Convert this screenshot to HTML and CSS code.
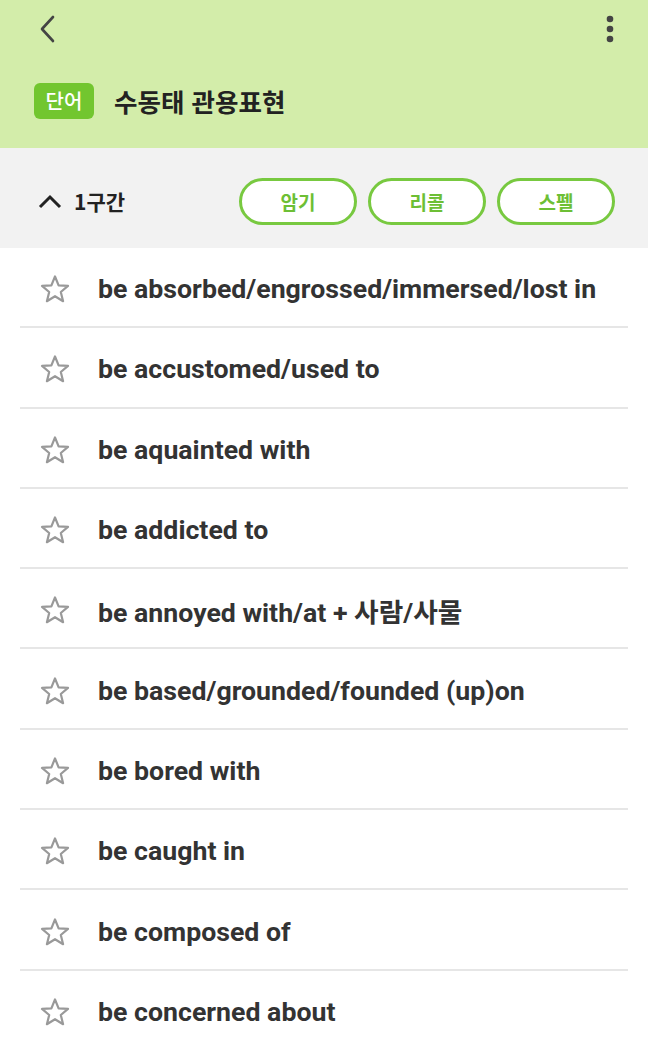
FILE: index.html
```html
<!DOCTYPE html>
<html lang="ko">

<head>
    <meta charset="UTF-8">
    <meta name="viewport" content="width=device-width, initial-scale=1.0">
    <title>수동태 관용표현</title>
    <link rel="stylesheet" href="styles.css">
</head>

<body>
    <header class="top">
        <div class="toolbar">
            <svg class="back" width="20" height="30" viewBox="0 0 20 30">
                <path d="M15 3 L4 15 L15 27" fill="none" stroke="#444" stroke-width="2.6" stroke-linecap="round" stroke-linejoin="round" />
            </svg>
            <svg class="more" width="10" height="30" viewBox="0 0 10 30">
                <circle cx="5" cy="5" r="3.3" fill="#444" />
                <circle cx="5" cy="15" r="3.3" fill="#444" />
                <circle cx="5" cy="25" r="3.3" fill="#444" />
            </svg>
        </div>
        <div class="title_row">
            <span class="badge">단어</span>
            <h1 class="title">수동태 관용표현</h1>
        </div>
    </header>

    <section class="section_bar">
        <div class="section_name">
            <svg width="24" height="16" viewBox="0 0 24 16">
                <path d="M2 14 L12 4 L22 14" fill="none" stroke="#222" stroke-width="3" stroke-linejoin="miter" />
            </svg>
            <span>1구간</span>
        </div>
        <div class="modes">
            <button class="mode_btn">암기</button>
            <button class="mode_btn">리콜</button>
            <button class="mode_btn">스펠</button>
        </div>
    </section>

    <ul class="word_list" id="word_list"></ul>

    <script>
        let words = [
            "be absorbed/engrossed/immersed/lost in",
            "be accustomed/used to",
            "be aquainted with",
            "be addicted to",
            "be annoyed with/at + 사람/사물",
            "be based/grounded/founded (up)on",
            "be bored with",
            "be caught in",
            "be composed of",
            "be concerned about"
        ];
        let list = document.getElementById("word_list");
        for (let i = 0; i < words.length; i++) {
            let row = document.createElement("li");
            row.className = "word_row";
            row.innerHTML = `<svg class="star" width="32" height="30" viewBox="0 0 32 30">
                <path d="M16 2.5 L19.6 11.3 L29 11.9 L21.8 18 L24.1 27.2 L16 22.2 L7.9 27.2 L10.2 18 L3 11.9 L12.4 11.3 Z"
                    fill="none" stroke="#999" stroke-width="2.2" stroke-linejoin="round" /></svg>
                <span class="word"></span>`;
            row.querySelector(".word").textContent = words[i];
            list.appendChild(row);
        }
    </script>
</body>

</html>
```

FILE: styles.css
```css
body {
    margin: 0;
    background-color: white;
    font-family: Roboto, "Noto Sans CJK KR", sans-serif;
    color: #333;
}

.top {
    background-color: #d3edaa;
    height: 148px;
}

.toolbar {
    display: flex;
    justify-content: space-between;
    align-items: center;
    padding: 14px 33px 0 38px;
    height: 30px;
}

.title_row {
    display: flex;
    align-items: center;
    padding: 38px 0 0 34px;
}

.badge {
    background-color: #72c62f;
    color: white;
    font-family: "Noto Sans CJK KR", sans-serif;
    font-size: 20px;
    font-weight: 500;
    border-radius: 6px;
    width: 60px;
    height: 36px;
    display: flex;
    align-items: center;
    justify-content: center;
}

.title {
    margin: 0 0 0 20px;
    font-family: "Noto Sans CJK KR", sans-serif;
    font-size: 25.5px;
    font-weight: bold;
    color: #222;
}

.section_bar {
    background-color: #f2f2f2;
    height: 100px;
    box-sizing: border-box;
    display: flex;
    align-items: center;
    justify-content: space-between;
    padding: 6px 33px 0 38px;
}

.section_name {
    display: flex;
    align-items: center;
    gap: 12px;
    font-family: "Noto Sans CJK KR", sans-serif;
    font-size: 21px;
    font-weight: bold;
    color: #222;
}

.modes {
    display: flex;
    gap: 11px;
}

.mode_btn {
    width: 118px;
    height: 47px;
    border: 3px solid #78c940;
    border-radius: 24px;
    background-color: white;
    color: #6dbf35;
    font-family: "Noto Sans CJK KR", sans-serif;
    font-size: 19px;
    font-weight: bold;
    padding: 0;
}

.word_list {
    list-style: none;
    margin: 0;
    padding: 0 20px;
}

.word_row {
    display: flex;
    align-items: center;
    height: 78.3px;
    border-bottom: 2px solid #e6e6e6;
}

.star {
    margin: 4px 27px 0 19px;
}

.word {
    font-size: 26.7px;
    font-weight: bold;
    color: #333;
    padding-top: 4px;
}
```
